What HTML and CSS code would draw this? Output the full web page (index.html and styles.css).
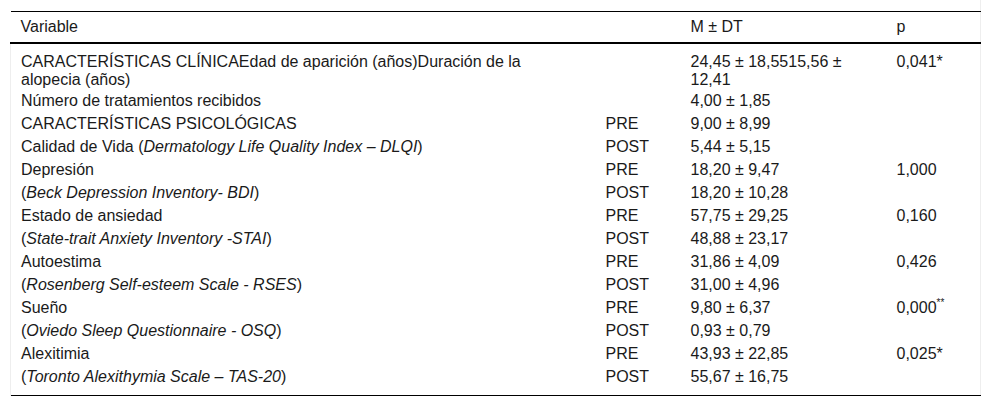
FILE: index.html
```html
<!DOCTYPE html>
<html lang="es">
<head>
<meta charset="utf-8">
<link rel="stylesheet" href="styles.css">
</head>
<body>
<div class="wrap">
<table class="tbl">
<colgroup>
<col class="c1"><col class="c2"><col class="c3"><col class="c4">
</colgroup>
<thead>
<tr><th>Variable</th><th></th><th>M ± DT</th><th>p</th></tr>
</thead>
<tbody>
<tr class="first"><td>CARACTERÍSTICAS CLÍNICAEdad de aparición (años)Duración de la alopecia (años)</td><td></td><td>24,45 ± 18,5515,56 ± 12,41</td><td>0,041*</td></tr>
<tr><td>Número de tratamientos recibidos</td><td></td><td>4,00 ± 1,85</td><td></td></tr>
<tr><td>CARACTERÍSTICAS PSICOLÓGICAS</td><td>PRE</td><td>9,00 ± 8,99</td><td></td></tr>
<tr><td>Calidad de Vida (<i>Dermatology Life Quality Index – DLQI</i>)</td><td>POST</td><td>5,44 ± 5,15</td><td></td></tr>
<tr><td>Depresión</td><td>PRE</td><td>18,20 ± 9,47</td><td>1,000</td></tr>
<tr><td>(<i>Beck Depression Inventory- BDI</i>)</td><td>POST</td><td>18,20 ± 10,28</td><td></td></tr>
<tr><td>Estado de ansiedad</td><td>PRE</td><td>57,75 ± 29,25</td><td>0,160</td></tr>
<tr><td>(<i>State-trait Anxiety Inventory -STAI</i>)</td><td>POST</td><td>48,88 ± 23,17</td><td></td></tr>
<tr><td>Autoestima</td><td>PRE</td><td>31,86 ± 4,09</td><td>0,426</td></tr>
<tr><td>(<i>Rosenberg Self-esteem Scale - RSES</i>)</td><td>POST</td><td>31,00 ± 4,96</td><td></td></tr>
<tr><td>Sueño</td><td>PRE</td><td>9,80 ± 6,37</td><td>0,000<sup>**</sup></td></tr>
<tr><td>(<i>Oviedo Sleep Questionnaire - OSQ</i>)</td><td>POST</td><td>0,93 ± 0,79</td><td></td></tr>
<tr><td>Alexitimia</td><td>PRE</td><td>43,93 ± 22,85</td><td>0,025*</td></tr>
<tr class="last"><td>(<i>Toronto Alexithymia Scale – TAS-20</i>)</td><td>POST</td><td>55,67 ± 16,75</td><td></td></tr>
</tbody>
</table>
</div>
</body>
</html>
```
FILE: styles.css
```css
html, body {
  margin: 0;
  padding: 0;
  background: #fff;
}
body {
  font-family: "Liberation Sans", Arial, sans-serif;
  font-size: 16px;
  color: #1a1a1a;
}
.wrap {
  width: 970px;
  padding: 11px 0 0 10px;
  border-right: 1px solid #eee;
}
.tbl {
  width: 970px;
  border-collapse: collapse;
  table-layout: fixed;
  border-top: 1px solid #000;
  border-bottom: 1px solid #000;
}
.c1 { width: 585px; }
.c2 { width: 85px; }
.c3 { width: 206px; }
.c4 { width: 94px; }
.tbl th {
  text-align: left;
  font-weight: normal;
  padding: 5px 10px 5px 10px;
  line-height: 20px;
  border-bottom: 2px solid #000;
}
.tbl td {
  text-align: left;
  vertical-align: top;
  padding: 2px 10px;
  line-height: 19px;
}
.tbl td:first-child {
  padding-right: 20px;
}
.tbl .first td {
  padding-top: 9px;
  padding-bottom: 0;
  line-height: 18px;
}
.tbl .last td {
  padding-bottom: 9px;
}
.tbl tbody td:first-child {
  border-left: 1px solid #eee;
}
.tbl sup {
  font-size: 10px;
  line-height: 0;
  vertical-align: 7px;
}
```
